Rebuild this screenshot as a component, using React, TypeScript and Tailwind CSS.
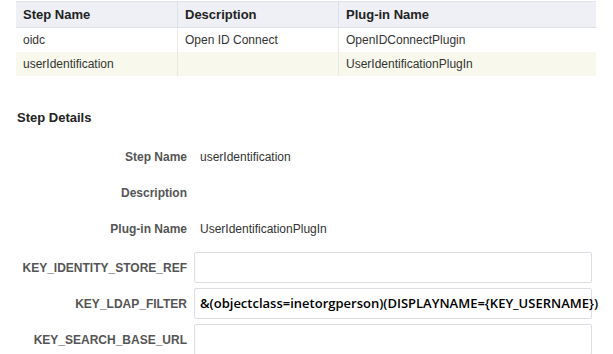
import React from "react";

const rows = [
  { step: "oidc", desc: "Open ID Connect", plugin: "OpenIDConnectPlugin", bg: "bg-white" },
  { step: "userIdentification", desc: "", plugin: "UserIdentificationPlugIn", bg: "bg-[#f8f9ec]" },
];

export default function App() {
  return (
    <div className="w-[613px] h-[354px] overflow-hidden bg-white text-[#333] font-['Liberation_Sans',Arial,sans-serif]">
      <div className="pt-px pl-4">
        <div className="w-[580px]">
          <div className="grid grid-cols-[161px_161px_258px] h-[27px] bg-[#eef0f5] border-t border-[#dfe3ea] border-b border-b-[#dde0e6] text-[13px] font-bold text-[#222]">
            <div className="flex items-center pl-[7px]">Step Name</div>
            <div className="flex items-center pl-[7px] border-l border-[#dde0e6]">Description</div>
            <div className="flex items-center pl-[7px] border-l border-[#dde0e6]">Plug-in Name</div>
          </div>
          {rows.map((r) => (
            <div key={r.step} className={`grid grid-cols-[161px_161px_258px] h-[24px] text-[12px] ${r.bg}`}>
              <div className="flex items-center pl-[7px]">{r.step}</div>
              <div className="flex items-center pl-[7px] border-l border-[#e8e9e4]">{r.desc}</div>
              <div className="flex items-center pl-[7px] border-l border-[#e8e9e4]">{r.plugin}</div>
            </div>
          ))}
        </div>
      </div>
      <div className="pl-[17px] pt-[34px] text-[13px] font-bold text-[#222] leading-[16px]">Step Details</div>
      <div className="mt-[23px] flex flex-col gap-[20px] text-[12px] leading-[16px]">
        {[
          ["Step Name", "userIdentification"],
          ["Description", ""],
          ["Plug-in Name", "UserIdentificationPlugIn"],
        ].map(([l, v]) => (
          <div key={l} className="flex items-center h-[16px]">
            <div className="w-[187px] text-right font-bold text-[#555]">{l}</div>
            <div className="pl-[13px]">{v}</div>
          </div>
        ))}
      </div>
      <div className="mt-[15px] flex flex-col gap-[5px] text-[12px]">
        {[
          ["KEY_IDENTITY_STORE_REF", ""],
          ["KEY_LDAP_FILTER", "&(objectclass=inetorgperson)(DISPLAYNAME={KEY_USERNAME})"],
          ["KEY_SEARCH_BASE_URL", ""],
        ].map(([l, v]) => (
          <div key={l} className="flex items-center">
            <div className="w-[187px] text-right font-bold text-[#555]">{l}</div>
            <div className="ml-[7px] w-[398px] h-[31px] border border-[#dcdee3] rounded-[2px] bg-white flex items-center">
              {v && (
                <span className="pl-[5px] whitespace-nowrap text-black font-semibold text-[13px] font-['Open_Sans',sans-serif]">
                  {v}
                </span>
              )}
            </div>
          </div>
        ))}
      </div>
    </div>
  );
}
